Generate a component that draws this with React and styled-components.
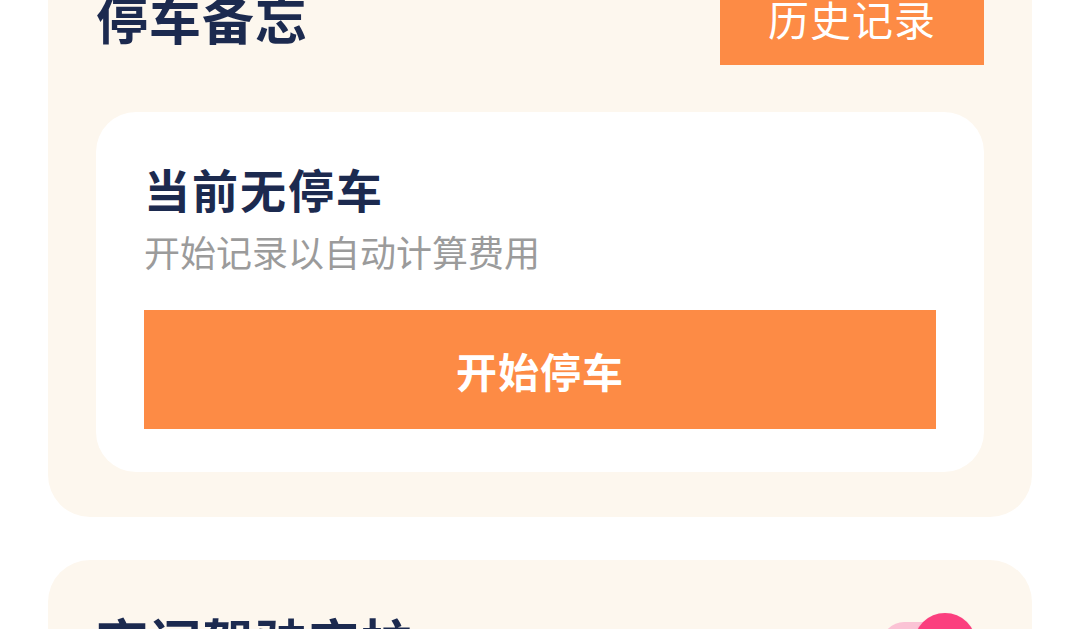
import React, { useState } from 'react'
import styled, { createGlobalStyle } from 'styled-components'

const GlobalStyle = createGlobalStyle`
  html, body {
    margin: 0;
    padding: 0;
    background: #ffffff;
    overflow: hidden;
  }
  body {
    font-family: "Noto Sans CJK SC", "Noto Sans", sans-serif;
  }
`

const Page = styled.main`
  display: flex;
  flex-direction: column;
  gap: 43px;
  padding: 0 48px;
  margin-top: -69px;
`

const Card = styled.section`
  background: #fdf7ee;
  border-radius: 42px;
  padding: ${p => p.$padding || '40px 48px 45px'};
  display: flex;
  flex-direction: column;
  gap: 47px;
`

const Header = styled.div`
  display: flex;
  align-items: center;
  justify-content: space-between;
`

const Heading = styled.h2`
  margin: 0;
  font-size: 52px;
  line-height: 60px;
  font-weight: 700;
  color: #1c2a4f;
  letter-spacing: 1px;
`

const HistoryButton = styled.button`
  width: 264px;
  height: 94px;
  border: 0;
  border-radius: 0;
  background: #fd8b45;
  color: #fff;
  font-family: inherit;
  font-size: 41px;
  font-weight: 400;
  letter-spacing: 1px;
  cursor: pointer;
`

const Panel = styled.div`
  background: #ffffff;
  border-radius: 40px;
  padding: 48px 48px 43px;
  display: flex;
  flex-direction: column;
`

const PanelTitle = styled.h3`
  margin: 0;
  font-size: 46px;
  line-height: 56px;
  font-weight: 700;
  color: #1c2a4f;
  letter-spacing: 2px;
`

const PanelHint = styled.p`
  margin: 11px 0 0;
  font-size: 36px;
  line-height: 48px;
  color: #9b9b9b;
`

const StartButton = styled.button`
  margin-top: 35px;
  height: 119px;
  border: 0;
  background: #fd8b45;
  color: #fff;
  font-family: inherit;
  font-size: 41px;
  font-weight: 700;
  letter-spacing: 1px;
  cursor: pointer;
`

const SettingRow = styled.div`
  display: flex;
  align-items: center;
  justify-content: space-between;
`

const Switch = styled.button`
  position: relative;
  width: 94px;
  height: 62px;
  margin-top: 6px;
  padding: 0;
  border: 0;
  background: transparent;
  cursor: pointer;
`

const Track = styled.span`
  position: absolute;
  left: 0;
  right: 16px;
  top: 9px;
  height: 44px;
  border-radius: 22px;
  background: ${p => (p.$on ? '#fbc3d5' : '#e2e2e2')};
`

const Knob = styled.span`
  position: absolute;
  top: 0;
  ${p => (p.$on ? 'right: 0;' : 'left: 0;')}
  width: 62px;
  height: 62px;
  border-radius: 50%;
  background: ${p => (p.$on ? '#fb3f7e' : '#ffffff')};
  box-shadow: 0 1px 2px rgba(180, 30, 80, 0.25);
`

export default function App() {
  const [nightGuard, setNightGuard] = useState(true)

  return (
    <>
      <GlobalStyle />
      <Page>
        <Card>
          <Header>
            <Heading>停车备忘</Heading>
            <HistoryButton>历史记录</HistoryButton>
          </Header>
          <Panel>
            <PanelTitle>当前无停车</PanelTitle>
            <PanelHint>开始记录以自动计算费用</PanelHint>
            <StartButton>开始停车</StartButton>
          </Panel>
        </Card>

        <Card $padding="47px 56px 48px 48px">
          <SettingRow>
            <Heading>夜间驾驶守护</Heading>
            <Switch onClick={() => setNightGuard(v => !v)} aria-pressed={nightGuard}>
              <Track $on={nightGuard} />
              <Knob $on={nightGuard} />
            </Switch>
          </SettingRow>
        </Card>
      </Page>
    </>
  )
}
